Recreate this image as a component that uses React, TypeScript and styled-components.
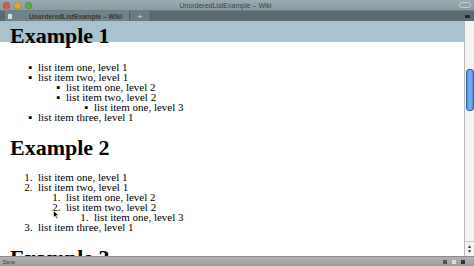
import styled, { createGlobalStyle } from "styled-components";

const Global = createGlobalStyle`
    html, body {
        margin: 0;
        padding: 0;
        overflow: hidden;
        background: #fff;
    }
`

const Window = styled.div`
    width: 474px;
    height: 266px;
    display: flex;
    flex-direction: column;
    overflow: hidden;
`

const TitleBar = styled.div`
    height: 10px;
    flex: none;
    display: flex;
    align-items: center;
    background: linear-gradient(#9aaab1, #8b9ba2);
    font-family: "Liberation Sans", Arial, sans-serif;
    font-size: 7px;
    color: #3a4448;
`

const Lights = styled.div`
    display: flex;
    gap: 4px;
    padding-left: 3px;
`

const Light = styled.span<{ $c: string }>`
    width: 7px;
    height: 7px;
    border-radius: 50%;
    background: ${p => p.$c};
    box-shadow: inset 0 0 1px rgba(0,0,0,0.5);
`

const Title = styled.div`
    flex: 1;
    text-align: center;
    margin-right: 40px;
`

const Pill = styled.span`
    width: 10px;
    height: 4px;
    border-radius: 3px;
    border: 1px solid #c8d2d6;
    margin-right: 3px;
`

const TabBar = styled.div`
    height: 11px;
    flex: none;
    display: flex;
    align-items: stretch;
    background: #596b71;
    font-family: "Liberation Sans", Arial, sans-serif;
    font-size: 6.6px;
    color: #2f3a3e;
    border-top: 1px solid #6d7f85;
    box-sizing: border-box;
`

const Tab = styled.div`
    width: 124px;
    margin-left: 5px;
    display: flex;
    align-items: center;
    background: #70828a;
    border-right: 1px solid #4d5e63;
    font-weight: bold;
`

const DocIcon = styled.span`
    width: 4px;
    height: 5px;
    background: #d6dcde;
    margin: 0 17px 0 3px;
`

const PlusTab = styled.div`
    width: 20px;
    display: flex;
    align-items: center;
    justify-content: center;
    background: #6a7c83;
    border-right: 1px solid #4d5e63;
    font-size: 8px;
    color: #d8e0e3;
`

const TabFill = styled.div`
    flex: 1;
    display: flex;
    justify-content: flex-end;
    align-items: center;
    padding-right: 4px;
`

const Overflow = styled.span`
    width: 5px;
    height: 3px;
    background: #1f2a2e;
`

const Main = styled.div`
    flex: 1;
    display: flex;
    min-height: 0;
`

const Page = styled.div`
    flex: 1;
    padding: 3px 10px 0;
    background: linear-gradient(#a9c2d0 0, #a9c2d0 21px, #fff 21px);
    font-family: "Liberation Serif", "Times New Roman", serif;
    color: #000;
    overflow: hidden;
    position: relative;
`

const Heading = styled.h1<{ $after: number }>`
    font-size: 22px;
    line-height: 24px;
    font-weight: bold;
    margin: 0 0 ${p => p.$after}px;
`

const List = styled.ul<{ $ordered?: boolean }>`
    margin: 0;
    padding-left: 28px;
    font-size: 11px;
    line-height: 10px;
    list-style-type: ${p => (p.$ordered ? "decimal" : "square")};

    & > li::marker {
        content: ${p => (p.$ordered ? `counter(list-item) ".\\2002"` : `"\\25AA\\2002"`)};
    }
`

const Block = styled.div<{ $gap: number }>`
    margin-bottom: ${p => p.$gap}px;
`

const Cursor = styled.svg`
    position: absolute;
    left: 53px;
    top: 189px;
`

const Scroll = styled.div`
    width: 9px;
    flex: none;
    display: flex;
    flex-direction: column;
    background: #f4f4f4;
    border-left: 1px solid #b9b9b9;
`

const Thumb = styled.div`
    margin: 48px 0 0 1px;
    height: 40px;
    border-radius: 3px;
    background: linear-gradient(90deg, #4f8fde, #7fb3ef, #4f8fde);
    border: 1px solid #2f5fa8;
`

const Arrows = styled.div`
    margin-top: auto;
    margin-bottom: 2px;
    display: flex;
    flex-direction: column;
    align-items: center;
    font-size: 5px;
    line-height: 5px;
    color: #333;
    border-top: 1px solid #c4c4c4;
    padding-top: 2px;
`

const StatusBar = styled.div`
    height: 10px;
    flex: none;
    display: flex;
    align-items: center;
    padding: 0 3px;
    background: linear-gradient(#b3b3b3, #9c9c9c);
    border-top: 1px solid #8a8a8a;
    box-sizing: border-box;
    font-family: "Liberation Sans", Arial, sans-serif;
    font-size: 5px;
    color: #333;
`

const StatusIcons = styled.div`
    margin-left: auto;
    display: flex;
    gap: 5px;
    align-items: center;
    margin-right: 6px;
`

const Sq = styled.span<{ $c: string }>`
    width: 4px;
    height: 4px;
    background: ${p => p.$c};
`

type Item = { text: string; children?: Item[] }

const items: Item[] = [
    { text: "list item one, level 1" },
    {
        text: "list item two, level 1",
        children: [
            { text: "list item one, level 2" },
            { text: "list item two, level 2", children: [{ text: "list item one, level 3" }] },
        ],
    },
    { text: "list item three, level 1" },
]

const Tree = ({ data, ordered }: { data: Item[]; ordered?: boolean }) => (
    <List as={ordered ? "ol" : "ul"} $ordered={ordered}>
        {data.map(it => (
            <li key={it.text}>
                {it.text}
                {it.children && <Tree data={it.children} ordered={ordered} />}
            </li>
        ))}
    </List>
)

export default function App() {
    return (
        <Window>
            <Global />
            <TitleBar>
                <Lights>
                    <Light $c="#d9574f" />
                    <Light $c="#d9a93a" />
                    <Light $c="#5fae4a" />
                </Lights>
                <Title>UnorderedListExample – Wiki</Title>
                <Pill />
            </TitleBar>
            <TabBar>
                <Tab>
                    <DocIcon />
                    UnorderedListExample – Wiki
                </Tab>
                <PlusTab>+</PlusTab>
                <TabFill>
                    <Overflow />
                </TabFill>
            </TabBar>
            <Main>
                <Page>
                    <Heading $after={14}>Example 1</Heading>
                    <Block $gap={14}>
                        <Tree data={items} />
                    </Block>
                    <Heading $after={12}>Example 2</Heading>
                    <Block $gap={14}>
                        <Tree data={items} ordered />
                    </Block>
                    <Heading $after={0}>Example 3</Heading>
                    <Cursor width="6" height="9" viewBox="0 0 6 9">
                        <path d="M0.5 0.5 L0.5 7.5 L2 6 L3.5 8.5 L4.5 8 L3.2 5.5 L5.5 5.5 Z" fill="#000" stroke="#fff" strokeWidth="0.6" />
                    </Cursor>
                </Page>
                <Scroll>
                    <Thumb />
                    <Arrows>
                        <span>▲</span>
                        <span>▼</span>
                    </Arrows>
                </Scroll>
            </Main>
            <StatusBar>
                Done
                <StatusIcons>
                    <Sq $c="#555" />
                    <Sq $c="#ddd" />
                    <Sq $c="#333" />
                </StatusIcons>
            </StatusBar>
        </Window>
    )
}
